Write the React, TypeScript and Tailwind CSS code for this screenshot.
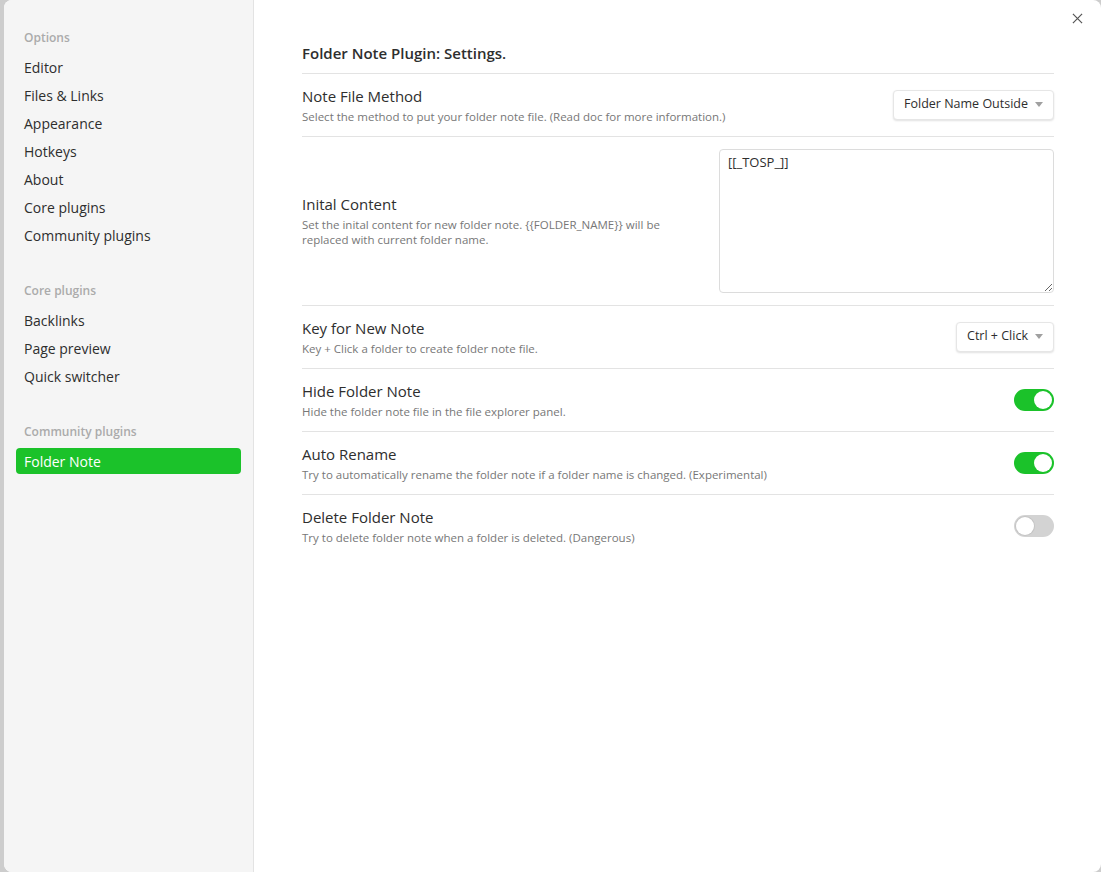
import React, { useState } from 'react';

type Row = {
  name: string;
  desc: string;
  kind: 'select' | 'toggle' | 'textarea';
  value?: string;
  on?: boolean;
};

const rows: Row[] = [
  {
    name: 'Note File Method',
    desc: 'Select the method to put your folder note file. (Read doc for more information.)',
    kind: 'select',
    value: 'Folder Name Outside',
  },
  {
    name: 'Inital Content',
    desc: 'Set the inital content for new folder note. {{FOLDER_NAME}} will be replaced with current folder name.',
    kind: 'textarea',
    value: '[[_TOSP_]]',
  },
  {
    name: 'Key for New Note',
    desc: 'Key + Click a folder to create folder note file.',
    kind: 'select',
    value: 'Ctrl + Click',
  },
  { name: 'Hide Folder Note', desc: 'Hide the folder note file in the file explorer panel.', kind: 'toggle', on: true },
  {
    name: 'Auto Rename',
    desc: 'Try to automatically rename the folder note if a folder name is changed. (Experimental)',
    kind: 'toggle',
    on: true,
  },
  {
    name: 'Delete Folder Note',
    desc: 'Try to delete folder note when a folder is deleted. (Dangerous)',
    kind: 'toggle',
    on: false,
  },
];

const sections = [
  { title: 'Options', items: ['Editor', 'Files & Links', 'Appearance', 'Hotkeys', 'About', 'Core plugins', 'Community plugins'] },
  { title: 'Core plugins', items: ['Backlinks', 'Page preview', 'Quick switcher'] },
  { title: 'Community plugins', items: ['Folder Note'] },
];

function Toggle({ on }: { on: boolean }) {
  const [checked, setChecked] = useState(on);
  return (
    <button
      onClick={() => setChecked(!checked)}
      className={`relative h-[22px] w-[40px] rounded-full ${checked ? 'bg-[#1bc22a]' : 'bg-[#d3d3d3]'}`}
    >
      <span
        className={`absolute top-[2px] h-[18px] w-[18px] rounded-full bg-white ${
          checked ? 'left-[20px]' : 'left-[2px] shadow-[0_0_0_1px_#c4c4c4]'
        }`}
      />
    </button>
  );
}

function Select({ value }: { value: string }) {
  return (
    <div className="flex h-[30px] items-center gap-[7px] rounded-[4px] border border-[#e6e6e6] bg-white pl-[10px] pr-[10px] text-[12.5px] text-[#2e2e2e] shadow-[0_1px_2px_rgba(0,0,0,0.12)]">
      <span>{value}</span>
      <span className="h-0 w-0 border-x-[4px] border-t-[5px] border-x-transparent border-t-[#a0a0a0]" />
    </div>
  );
}

export default function App() {
  return (
    <div
      className="flex h-[872px] w-full bg-[#cdcdcd] pl-[4px]"
      style={{ fontFamily: '"Open Sans", "Noto Sans", sans-serif' }}
    >
      <div className="relative flex flex-1 overflow-hidden rounded-[8px] bg-white">
        <aside className="w-[250px] shrink-0 border-r border-[#e3e3e3] bg-[#f5f5f5] px-[12px] pt-[29px]">
          {sections.map((s, i) => (
            <div key={s.title} className={i > 0 ? 'mt-[34px]' : ''}>
              <div className="px-[8px] pb-[7px] text-[12px] font-semibold text-[#ababab]">{s.title}</div>
              {s.items.map((item) => {
                const active = item === 'Folder Note' && s.title === 'Community plugins';
                return (
                  <div
                    key={item}
                    className={`mb-[2px] flex h-[26px] items-center rounded-[4px] px-[8px] text-[14px] ${
                      active ? 'bg-[#1bc22a] text-white' : 'text-[#2e2e2e]'
                    }`}
                  >
                    {item}
                  </div>
                );
              })}
            </div>
          ))}
        </aside>

        <main className="flex-1 pl-[48px] pr-[47px] pt-[42px] text-[#2e2e2e]">
          <h2 className="border-b border-[#e3e3e3] pb-[8px] text-[15px] font-semibold">Folder Note Plugin: Settings.</h2>
          {rows.map((r, i) => (
            <div
              key={r.name}
              className={`flex items-center justify-between py-[12px] ${
                i < rows.length - 1 ? 'border-b border-[#e3e3e3]' : ''
              }`}
            >
              <div className={r.kind === 'textarea' ? 'w-[390px]' : ''}>
                <div className="text-[15px] leading-[20px]">{r.name}</div>
                <div className="mt-[3px] text-[11.5px] leading-[15px] text-[#777]">{r.desc}</div>
              </div>
              {r.kind === 'select' && <Select value={r.value!} />}
              {r.kind === 'toggle' && <Toggle on={!!r.on} />}
              {r.kind === 'textarea' && (
                <textarea
                  defaultValue={r.value}
                  className="h-[144px] w-[335px] resize rounded-[4px] border border-[#dcdcdc] px-[8px] py-[3px] text-[13px] text-[#2e2e2e] outline-none"
                />
              )}
            </div>
          ))}
        </main>

        <button className="absolute right-[17px] top-[11px] flex h-[14px] w-[14px] items-center justify-center text-[#555]">
          <svg width="11" height="11" viewBox="0 0 12 12" stroke="currentColor" strokeWidth="1.3">
            <path d="M1 1 L11 11 M11 1 L1 11" />
          </svg>
        </button>
      </div>
    </div>
  );
}
